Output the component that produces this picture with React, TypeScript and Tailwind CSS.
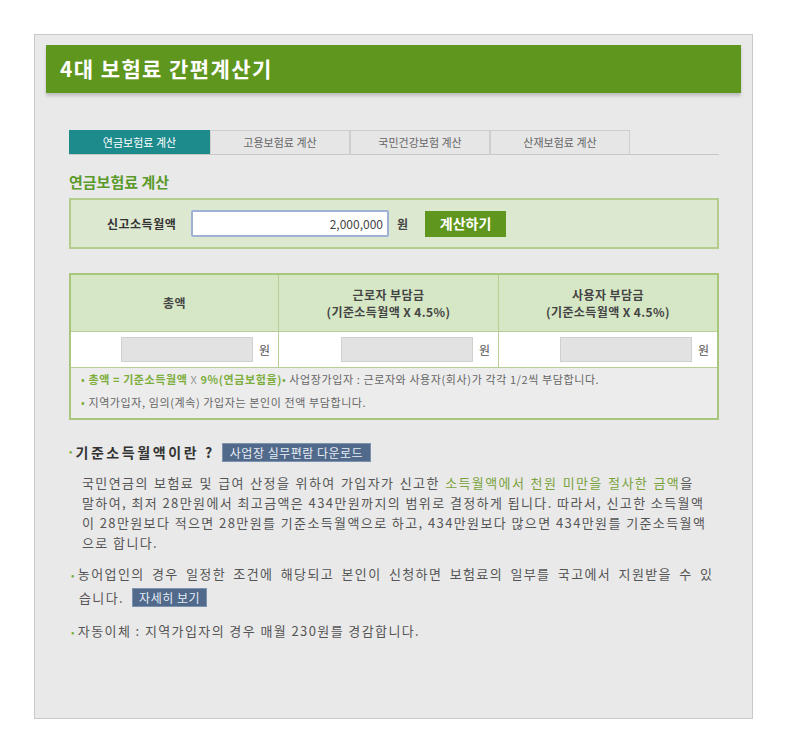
import React from "react";

const KR = { fontFamily: '"Noto Sans CJK KR", "Noto Sans", sans-serif' };

function Tab({ label, active }: { label: string; active?: boolean }) {
  return (
    <div
      className={
        active
          ? "w-[141px] h-[24px] flex items-center justify-center bg-[#1d8a8c] text-white text-[11px]"
          : "w-[140px] h-[24px] flex items-center justify-center bg-[#e6e6e6] border border-b-0 border-[#cfcfcf] text-[#666] text-[11px]"
      }
    >
      {label}
    </div>
  );
}

function ValueCell({ last }: { last?: boolean }) {
  return (
    <div className={"flex items-center justify-end gap-[6px] pr-[8px] bg-white h-full " + (last ? "" : "border-r border-[#b7cf96]")}>
      <div className="w-[132px] h-[25px] bg-[#e2e2e2] border border-[#d0d0d0]" />
      <span className="text-[12px] text-[#555]">원</span>
    </div>
  );
}

export default function App() {
  return (
    <div className="min-h-[752px] bg-white pt-[34px] pl-[34px]" style={KR}>
      <div className="w-[719px] h-[685px] bg-[#e9e9e9] border border-[#c9c9c9] pt-[10px]">
        {/* Header */}
        <div className="mx-[11px] h-[48px] bg-[#5f971e] shadow-[0_3px_3px_rgba(0,0,0,0.18)] flex items-center pl-[14px]">
          <h1 className="text-white text-[21px] font-bold tracking-[1.4px]">4대 보험료 간편계산기</h1>
        </div>

        <div className="pl-[34px] pr-[33px] pt-[37px]">
          {/* Tabs */}
          <div className="flex border-b border-[#c8c8c8]">
            <Tab label="연금보험료 계산" active />
            <Tab label="고용보험료 계산" />
            <Tab label="국민건강보험 계산" />
            <Tab label="산재보험료 계산" />
          </div>

          <h2 className="mt-[16px] text-[15px] font-bold text-[#5a9a2a] leading-[22px]">연금보험료 계산</h2>

          {/* Input box */}
          <div className="mt-[5px] h-[51px] bg-[#dce8cf] border-2 border-[#b3cd8d] flex items-center">
            <span className="ml-[36px] w-[84px] text-[12px] font-bold text-[#333] tracking-[0.5px]">신고소득월액</span>
            <div className="w-[198px] h-[27px] bg-white border-2 border-[#9fb2d6] rounded-[2px] flex items-center justify-end pr-[4px] text-[12px] text-[#444]">
              2,000,000
            </div>
            <span className="ml-[8px] text-[12px] font-bold text-[#444]">원</span>
            <div className="ml-[17px] w-[81px] h-[26px] bg-[#5f971e] flex items-center justify-center text-white text-[14px] font-bold">
              계산하기
            </div>
          </div>

          {/* Table */}
          <div className="mt-[24px] border-2 border-[#a8c77c] bg-[#ececec]">
            <div className="grid grid-cols-[208px_220px_1fr] h-[57px] bg-[#d6e7c6] border-b border-[#b7cf96]">
              <div className="flex items-center justify-center border-r border-[#b7cf96] text-[12px] font-bold text-[#444] tracking-[0.4px]">총액</div>
              <div className="flex flex-col items-center justify-center border-r border-[#b7cf96] text-[12px] font-bold text-[#444] leading-[17px] tracking-[0.4px]">
                <span>근로자 부담금</span>
                <span>(기준소득월액 X 4.5%)</span>
              </div>
              <div className="flex flex-col items-center justify-center text-[12px] font-bold text-[#444] leading-[17px] tracking-[0.4px]">
                <span>사용자 부담금</span>
                <span>(기준소득월액 X 4.5%)</span>
              </div>
            </div>
            <div className="grid grid-cols-[208px_220px_1fr] h-[36px] border-b border-[#b7cf96]">
              <ValueCell />
              <ValueCell />
              <ValueCell last />
            </div>
            <div className="px-[10px] pt-[0px] pb-[4px] text-[11px] leading-[23px] text-[#666] tracking-[0.6px] whitespace-nowrap">
              <div>
                <span className="text-[#7dae3c]">•</span>{" "}
                <span className="text-[#7dae3c] font-bold">총액 = 기준소득월액</span>{" "}
                <span className="text-[#999]">X</span>{" "}
                <span className="text-[#7dae3c] font-bold">9%(연금보험율)</span>
                <span className="text-[#7dae3c]">•</span> 사업장가입자 : 근로자와 사용자(회사)가 각각 1/2씩 부담합니다.
              </div>
              <div>
                <span className="text-[#7dae3c]">•</span> 지역가입자, 임의(계속) 가입자는 본인이 전액 부담합니다.
              </div>
            </div>
          </div>

          {/* Section */}
          <div className="mt-[22px] flex items-center">
            <span className="text-[#7dae3c] text-[10px] self-start mt-[1px] mr-[3px]">•</span>
            <span className="text-[14px] font-bold text-[#333] tracking-[2.6px]">기준소득월액이란 ?</span>
            <span className="ml-[7px] h-[19px] px-[7px] bg-[#51698a] border border-[#7d93ad] text-[#e6edf5] text-[12px] tracking-[0.5px] flex items-center">
              사업장 실무편람 다운로드
            </span>
          </div>

          <p className="mt-[10px] ml-[13px] text-[13px] leading-[20px] text-[#555] whitespace-nowrap tracking-[1.4px]">
            <span className="[word-spacing:1px]">국민연금의 보험료 및 급여 산정을 위하여 가입자가 신고한 </span>
            <span className="text-[#7aa23c] [word-spacing:1px]">소득월액에서 천원 미만을 절사한 금액</span>을
            <br />
            말하여, 최저 28만원에서 최고금액은 434만원까지의 범위로 결정하게 됩니다. 따라서, 신고한 소득월액
            <br />
            이 28만원보다 적으면 28만원를 기준소득월액으로 하고, 434만원보다 많으면 434만원를 기준소득월액
            <br />
            으로 합니다.
          </p>

          <div className="mt-[9px] ml-[2px] text-[13px] leading-[23px] text-[#555] whitespace-nowrap tracking-[1.4px]">
            <div className="[word-spacing:3px]">
              <span className="text-[#7dae3c] text-[10px] mr-[2px]">•</span>농어업인의 경우 일정한 조건에 해당되고 본인이 신청하면 보험료의 일부를 국고에서 지원받을 수 있
            </div>
            <div className="flex items-center h-[23px] pl-[8px]">
              습니다.
              <span className="ml-[8px] h-[19px] px-[6px] bg-[#51698a] border border-[#7d93ad] text-[#e6edf5] text-[12px] tracking-[0.5px] flex items-center leading-none">
                자세히 보기
              </span>
            </div>
            <div className="mt-[10px]">
              <span className="text-[#7dae3c] text-[10px] mr-[2px]">•</span>자동이체 : 지역가입자의 경우 매월 230원를 경감합니다.
            </div>
          </div>
        </div>
      </div>
    </div>
  );
}
